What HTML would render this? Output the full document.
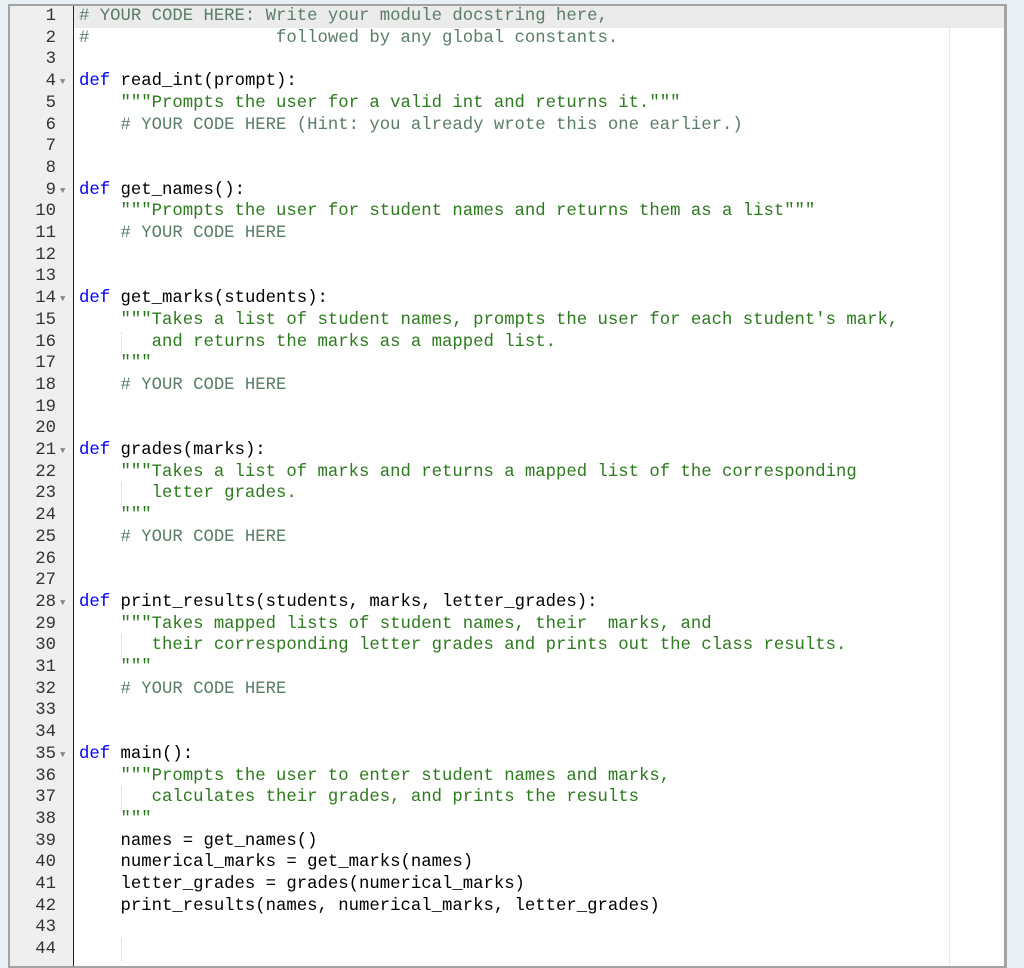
<!DOCTYPE html>
<html><head><meta charset="utf-8"><style>
body{margin:0;background:#e9f0f3;width:1024px;height:952px;overflow:hidden;font-family:"Liberation Mono",monospace}
#ed{position:absolute;left:8px;top:4px;width:994px;height:960px;border:2px solid #a3a3a3;border-right-width:3px;background:#fff;overflow:hidden}
#gut{position:absolute;left:0;top:0;width:63px;height:100%;background:#efefef;border-right:1px solid #222}
#margin{position:absolute;left:939px;top:0;width:1px;height:100%;background:#e6e6e6}
.hl{position:absolute;left:0;top:0;width:100%;height:22px;background:#ebebeb}
.row{position:absolute;left:0;width:100%;height:21.7px}
.ln{position:absolute;left:0;width:46px;text-align:right;font-size:17.3px;color:#333;line-height:21.7px}
.fold{position:absolute;left:50px;top:1px;font-size:9px;color:#888;line-height:21.7px}
.c{position:absolute;left:69px;white-space:pre;font-size:17.3px;line-height:21.7px;color:#000}
.k{color:#0000ff}.s{color:#2d7a1f}.m{color:#5b7d68}
.g{position:absolute;left:111px;width:0;height:21.7px;border-left:1px dotted #ccc}
</style></head><body><div id="ed">
<div class="hl"></div><div id="gut"></div><div id="margin"></div>
<div class="row" style="top:0px"><span class="ln">1</span><span class="c m"># YOUR CODE HERE: Write your module docstring here,</span></div>
<div class="row" style="top:21.7px"><span class="ln">2</span><span class="c m">#                  followed by any global constants.</span></div>
<div class="row" style="top:43.4px"><span class="ln">3</span></div>
<div class="row" style="top:65.1px"><span class="ln">4</span><span class="fold">▼</span><span class="c"><span class="k">def</span> read_int(prompt):</span></div>
<div class="row" style="top:86.8px"><span class="ln">5</span><span class="c s">    """Prompts the user for a valid int and returns it."""</span></div>
<div class="row" style="top:108.5px"><span class="ln">6</span><span class="c m">    # YOUR CODE HERE (Hint: you already wrote this one earlier.)</span></div>
<div class="row" style="top:130.2px"><span class="ln">7</span></div>
<div class="row" style="top:151.9px"><span class="ln">8</span></div>
<div class="row" style="top:173.6px"><span class="ln">9</span><span class="fold">▼</span><span class="c"><span class="k">def</span> get_names():</span></div>
<div class="row" style="top:195.3px"><span class="ln">10</span><span class="c s">    """Prompts the user for student names and returns them as a list"""</span></div>
<div class="row" style="top:217px"><span class="ln">11</span><span class="c m">    # YOUR CODE HERE</span></div>
<div class="row" style="top:238.7px"><span class="ln">12</span></div>
<div class="row" style="top:260.4px"><span class="ln">13</span></div>
<div class="row" style="top:282.1px"><span class="ln">14</span><span class="fold">▼</span><span class="c"><span class="k">def</span> get_marks(students):</span></div>
<div class="row" style="top:303.8px"><span class="ln">15</span><span class="c s">    """Takes a list of student names, prompts the user for each student's mark,</span></div>
<div class="row" style="top:325.5px"><span class="ln">16</span><span class="g"></span><span class="c s">       and returns the marks as a mapped list.</span></div>
<div class="row" style="top:347.2px"><span class="ln">17</span><span class="c s">    """</span></div>
<div class="row" style="top:368.9px"><span class="ln">18</span><span class="c m">    # YOUR CODE HERE</span></div>
<div class="row" style="top:390.6px"><span class="ln">19</span></div>
<div class="row" style="top:412.3px"><span class="ln">20</span></div>
<div class="row" style="top:434px"><span class="ln">21</span><span class="fold">▼</span><span class="c"><span class="k">def</span> grades(marks):</span></div>
<div class="row" style="top:455.7px"><span class="ln">22</span><span class="c s">    """Takes a list of marks and returns a mapped list of the corresponding</span></div>
<div class="row" style="top:477.4px"><span class="ln">23</span><span class="g"></span><span class="c s">       letter grades.</span></div>
<div class="row" style="top:499.1px"><span class="ln">24</span><span class="c s">    """</span></div>
<div class="row" style="top:520.8px"><span class="ln">25</span><span class="c m">    # YOUR CODE HERE</span></div>
<div class="row" style="top:542.5px"><span class="ln">26</span></div>
<div class="row" style="top:564.2px"><span class="ln">27</span></div>
<div class="row" style="top:585.9px"><span class="ln">28</span><span class="fold">▼</span><span class="c"><span class="k">def</span> print_results(students, marks, letter_grades):</span></div>
<div class="row" style="top:607.6px"><span class="ln">29</span><span class="c s">    """Takes mapped lists of student names, their  marks, and</span></div>
<div class="row" style="top:629.3px"><span class="ln">30</span><span class="g"></span><span class="c s">       their corresponding letter grades and prints out the class results.</span></div>
<div class="row" style="top:651px"><span class="ln">31</span><span class="c s">    """</span></div>
<div class="row" style="top:672.7px"><span class="ln">32</span><span class="c m">    # YOUR CODE HERE</span></div>
<div class="row" style="top:694.4px"><span class="ln">33</span></div>
<div class="row" style="top:716.1px"><span class="ln">34</span></div>
<div class="row" style="top:737.8px"><span class="ln">35</span><span class="fold">▼</span><span class="c"><span class="k">def</span> main():</span></div>
<div class="row" style="top:759.5px"><span class="ln">36</span><span class="c s">    """Prompts the user to enter student names and marks,</span></div>
<div class="row" style="top:781.2px"><span class="ln">37</span><span class="g"></span><span class="c s">       calculates their grades, and prints the results</span></div>
<div class="row" style="top:802.9px"><span class="ln">38</span><span class="c s">    """</span></div>
<div class="row" style="top:824.6px"><span class="ln">39</span><span class="c">    names = get_names()</span></div>
<div class="row" style="top:846.3px"><span class="ln">40</span><span class="c">    numerical_marks = get_marks(names)</span></div>
<div class="row" style="top:868px"><span class="ln">41</span><span class="c">    letter_grades = grades(numerical_marks)</span></div>
<div class="row" style="top:889.7px"><span class="ln">42</span><span class="c">    print_results(names, numerical_marks, letter_grades)</span></div>
<div class="row" style="top:911.4px"><span class="ln">43</span></div>
<div class="row" style="top:933.1px"><span class="ln">44</span><span class="g"></span></div>
</div></body></html>
